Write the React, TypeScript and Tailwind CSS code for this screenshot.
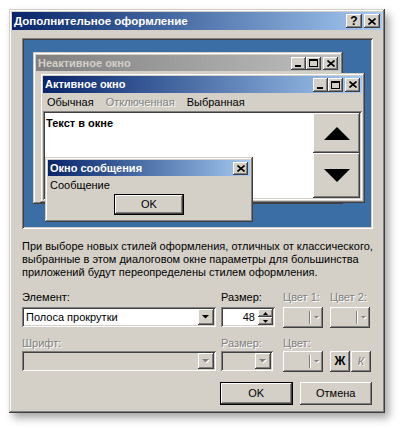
import React from "react";

const RAISED =
  "bg-[#d4d0c8] shadow-[inset_-1px_-1px_0_#404040,inset_1px_1px_0_#ffffff,inset_-2px_-2px_0_#808080,inset_2px_2px_0_#d4d0c8]";
const FRAME =
  "bg-[#d4d0c8] shadow-[inset_-1px_-1px_0_#404040,inset_1px_1px_0_#d4d0c8,inset_-2px_-2px_0_#808080,inset_2px_2px_0_#ffffff]";
const SUNKEN =
  "shadow-[inset_1px_1px_0_#808080,inset_-1px_-1px_0_#ffffff,inset_2px_2px_0_#404040,inset_-2px_-2px_0_#d4d0c8]";
const DISABLED = "text-[#808080] [text-shadow:1px_1px_0_#ffffff]";

function CloseGlyph() {
  return (
    <svg width="8" height="7" viewBox="0 0 8 7">
      <path d="M0.5 0.5 L7.5 6.5 M7.5 0.5 L0.5 6.5" stroke="#000" strokeWidth="1.6" fill="none" />
    </svg>
  );
}

function CapBtn({ kind, w = 16, h = 14 }: { kind: "help" | "close" | "min" | "max"; w?: number; h?: number }) {
  return (
    <div
      className={`${RAISED} flex items-center justify-center shrink-0`}
      style={{ width: w, height: h }}
    >
      {kind === "close" && <CloseGlyph />}
      {kind === "help" && <span className="font-bold text-[12px] leading-none -mt-px">?</span>}
      {kind === "min" && <div className="w-[6px] h-[2px] bg-black mt-[6px] -ml-px" />}
      {kind === "max" && <div className="w-[9px] h-[8px] border border-black border-t-2" />}
    </div>
  );
}

function Arrow({ disabled }: { disabled?: boolean }) {
  return (
    <svg width="8" height="5" viewBox="0 0 8 5">
      {disabled && <path d="M1 1 L8 1 L4.5 4.5 Z" fill="#fff" />}
      <path d="M0 0 L7 0 L3.5 3.5 Z" fill={disabled ? "#808080" : "#000"} />
    </svg>
  );
}

function Combo({ text, disabled, w }: { text?: string; disabled?: boolean; w: number }) {
  return (
    <div className={`${SUNKEN} h-[20px] p-[2px] flex`} style={{ width: w }}>
      <div className={`flex-1 flex items-center pl-[2px] ${disabled ? "bg-[#d4d0c8]" : "bg-white"}`}>
        {text}
      </div>
      <div className={`${RAISED} w-[16px] flex items-center justify-center`}>
        <Arrow disabled={disabled} />
      </div>
    </div>
  );
}

function ColorBtn() {
  return (
    <div className={`${RAISED} w-[40px] h-[21px] flex items-center`}>
      <div className="flex-1" />
      <div className="w-px h-[13px] bg-[#808080] border-r border-white box-content" />
      <div className="w-[9px] flex items-center justify-center ml-[1px] mr-[2px]">
        <svg width="6" height="4" viewBox="0 0 6 4">
          <path d="M1 1 L6 1 L3.5 3.5 Z" fill="#fff" />
          <path d="M0 0 L5 0 L2.5 2.5 Z" fill="#808080" />
        </svg>
      </div>
    </div>
  );
}

function SpinBtn({ up }: { up?: boolean }) {
  return (
    <div className={`${RAISED} flex-1 flex items-center justify-center`}>
      <svg width="5" height="3" viewBox="0 0 5 3">
        <path d={up ? "M0 3 L5 3 L2.5 0 Z" : "M0 0 L5 0 L2.5 3 Z"} fill="#000" />
      </svg>
    </div>
  );
}

function PushBtn({ label, isDefault }: { label: string; isDefault?: boolean }) {
  return (
    <div className={`w-[73px] h-[23px] ${isDefault ? "border border-black" : ""}`}>
      <div className={`${RAISED} w-full h-full flex items-center justify-center`}>{label}</div>
    </div>
  );
}

export default function App() {
  return (
    <div className="w-[400px] h-[428px] bg-white overflow-hidden font-['Liberation_Sans',Arial,sans-serif] text-[11px] leading-[13px] text-black">
      <div className="ml-[9px] mt-[9px] w-[376px] h-[404px] bg-[#d4d0c8] p-[3px] flex flex-col shadow-[inset_-1px_-1px_0_#404040,inset_1px_1px_0_#d4d0c8,inset_-2px_-2px_0_#808080,inset_2px_2px_0_#ffffff,4px_5px_8px_rgba(0,0,0,0.35)]">
        {/* Title bar */}
        <div className="h-[18px] flex items-center justify-between px-[2px] bg-linear-to-r from-[#0a246a] to-[#a6caf0]">
          <span className="text-white font-bold text-[11.5px]">Дополнительное оформление</span>
          <div className="flex gap-[2px]">
            <CapBtn kind="help" />
            <CapBtn kind="close" />
          </div>
        </div>

        <div className="px-[10px] flex flex-col">
          {/* Preview */}
          <div className={`${SUNKEN} mt-[8px] w-[351px] h-[191px] p-[2px]`}>
            <div className="relative w-full h-full bg-[#3a6ea5]">
              {/* Inactive window */}
              <div className={`${FRAME} absolute left-[9px] top-[12px] w-[310px] h-[152px] p-[3px]`}>
                <div className="h-[16px] flex items-center justify-between px-[2px] bg-linear-to-r from-[#808080] to-[#c0c0c0]">
                  <span className="font-bold text-[#d4d0c8]">Неактивное окно</span>
                  <div className="flex">
                    <CapBtn kind="min" w={15} h={13} />
                    <CapBtn kind="max" w={15} h={13} />
                    <div className="w-[2px]" />
                    <CapBtn kind="close" w={15} h={13} />
                  </div>
                </div>
              </div>

              {/* Active window */}
              <div className={`${FRAME} absolute left-[16px] top-[33px] w-[325px] h-[130px] p-[3px] flex flex-col`}>
                <div className="h-[17px] shrink-0 flex items-center justify-between px-[2px] bg-linear-to-r from-[#0a246a] to-[#a6caf0]">
                  <span className="font-bold text-white">Активное окно</span>
                  <div className="flex">
                    <CapBtn kind="min" w={15} h={14} />
                    <CapBtn kind="max" w={15} h={14} />
                    <div className="w-[2px]" />
                    <CapBtn kind="close" w={15} h={14} />
                  </div>
                </div>
                <div className="h-[18px] shrink-0 flex items-center pl-[4px] gap-[12px]">
                  <span>Обычная</span>
                  <span className={DISABLED}>Отключенная</span>
                  <span>Выбранная</span>
                </div>
                <div className={`${SUNKEN} flex-1 p-[2px] flex`}>
                  <div className="flex-1 bg-white pl-[1px] pt-[4px] font-bold">Текст в окне</div>
                  <div className="w-[47px] flex flex-col">
                    <div className={`${RAISED} h-[40px] flex items-center justify-center`}>
                      <svg width="26" height="13" viewBox="0 0 26 13">
                        <path d="M0 13 L26 13 L13 0 Z" fill="#000" />
                      </svg>
                    </div>
                    <div className={`${RAISED} flex-1 flex items-center justify-center`}>
                      <svg width="26" height="13" viewBox="0 0 26 13">
                        <path d="M0 0 L26 0 L13 13 Z" fill="#000" />
                      </svg>
                    </div>
                  </div>
                </div>
              </div>

              {/* Message box */}
              <div className={`${FRAME} absolute left-[21px] top-[117px] w-[208px] h-[65px] p-[3px] flex flex-col shadow-[inset_-1px_-1px_0_#404040,inset_1px_1px_0_#d4d0c8,inset_-2px_-2px_0_#808080,inset_2px_2px_0_#ffffff,2px_2px_3px_rgba(0,0,0,0.3)]`}>
                <div className="h-[16px] flex items-center justify-between px-[2px] bg-linear-to-r from-[#0a246a] to-[#a6caf0]">
                  <span className="font-bold text-white">Окно сообщения</span>
                  <CapBtn kind="close" w={15} h={13} />
                </div>
                <div className="pl-[2px] mt-[3px]">Сообщение</div>
                <div className="mt-[2px] flex justify-center">
                  <div className="w-[70px] h-[21px] border border-black">
                    <div className={`${RAISED} w-full h-full flex items-center justify-center`}>OK</div>
                  </div>
                </div>
              </div>
            </div>
          </div>

          {/* Description */}
          <p className="mt-[11px] w-[352px]">
            При выборе новых стилей оформления, отличных от классического, выбранные в этом диалоговом окне параметры для большинства приложений будут переопределены стилем оформления.
          </p>

          {/* Row 1 */}
          <div className="mt-[12px] flex">
            <div className="w-[194px] flex flex-col gap-[3px]">
              <span>Элемент:</span>
              <Combo w={194} text="Полоса прокрутки" />
            </div>
            <div className="ml-[5px] w-[54px] flex flex-col gap-[3px]">
              <span>Размер:</span>
              <div className={`${SUNKEN} h-[20px] p-[2px] flex`}>
                <div className="flex-1 bg-white flex items-center justify-end pr-[3px]">48</div>
                <div className="w-[15px] flex flex-col">
                  <SpinBtn up />
                  <SpinBtn />
                </div>
              </div>
            </div>
            <div className="ml-[8px] w-[40px] flex flex-col gap-[3px]">
              <span className={DISABLED}>Цвет 1:</span>
              <ColorBtn />
            </div>
            <div className="ml-[7px] w-[42px] flex flex-col gap-[3px]">
              <span className={DISABLED}>Цвет 2:</span>
              <ColorBtn />
            </div>
          </div>

          {/* Row 2 */}
          <div className="mt-[9px] flex">
            <div className="w-[194px] flex flex-col gap-[1px]">
              <span className={DISABLED}>Шрифт:</span>
              <Combo w={194} disabled />
            </div>
            <div className="ml-[5px] w-[52px] flex flex-col gap-[1px]">
              <span className={DISABLED}>Размер:</span>
              <Combo w={52} disabled />
            </div>
            <div className="ml-[10px] w-[40px] flex flex-col gap-[1px]">
              <span className={DISABLED}>Цвет:</span>
              <ColorBtn />
            </div>
            <div className="ml-[7px] flex flex-col gap-[1px]">
              <span>&nbsp;</span>
              <div className="flex gap-[1px]">
                <div className={`${RAISED} w-[20px] h-[21px] flex items-center justify-center font-bold text-[12px]`}>Ж</div>
                <div className={`${RAISED} w-[20px] h-[21px] flex items-center justify-center italic ${DISABLED}`}>К</div>
              </div>
            </div>
          </div>

          {/* Buttons */}
          <div className="mt-[10px] ml-[198px] flex gap-[7px]">
            <PushBtn label="OK" isDefault />
            <PushBtn label="Отмена" />
          </div>
        </div>
      </div>
    </div>
  );
}
